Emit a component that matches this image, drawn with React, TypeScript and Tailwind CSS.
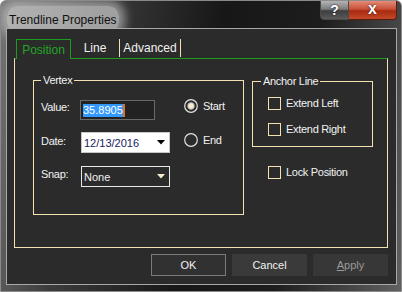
import React from 'react';

function Radio({ checked }: { checked?: boolean }) {
  return (
    <svg width="14" height="14" viewBox="0 0 14 14" className="shrink-0">
      <circle cx="7" cy="7" r="6.3" fill="#2b2b2b" stroke="#e4e4e4" strokeWidth="1.2" />
      {checked && <circle cx="7" cy="7" r="3.4" fill="#f6ecd0" stroke="#9a9a9a" strokeWidth="0.8" />}
    </svg>
  );
}

function CheckBox({ label }: { label: string }) {
  return (
    <div className="flex items-center h-[13px]">
      <div className="w-[13px] h-[13px] border border-[#f2e2b2] shrink-0" />
      <span className="ml-[5px] text-[11px] tracking-[-0.3px] text-[#f2f2f2] leading-[13px]">{label}</span>
    </div>
  );
}

function Arrow({ color }: { color: string }) {
  return (
    <svg width="8" height="5" viewBox="0 0 8 5" className="shrink-0">
      <path d="M0 0 L8 0 L4 4.5 Z" fill={color} />
    </svg>
  );
}

export default function App() {
  return (
    <div className="w-[402px] h-[292px] flex flex-col rounded-t-[6px] border border-[#8a8a8a] bg-[linear-gradient(100deg,#767676_0%,#3c3c3c_22%,#171717_50%,#1d1d1d_72%,#616161_100%)] font-['Liberation_Sans',Arial,sans-serif] overflow-hidden">
      {/* Title bar */}
      <div className="h-[27px] flex items-start justify-between shrink-0">
        <div className="ml-[6px] mt-[5px] px-[2px] py-[1px] rounded-[10px] bg-[rgba(205,205,205,0.7)] shadow-[0_0_10px_6px_rgba(205,205,205,0.6)]">
          <span className="text-[12px] leading-[15px] text-[#111]">Trendline Properties</span>
        </div>
        <div className="flex -mt-px mr-[4px]">
          <div className="w-[29px] h-[20px] flex items-center justify-center rounded-bl-[4px] border border-[#4a4a4a] bg-[linear-gradient(180deg,#b4b4b4_0%,#7c7c7c_45%,#3e3e3e_55%,#5a5a5a_100%)]">
            <span className="text-white font-bold text-[14px] leading-[14px] [text-shadow:0_0_2px_#000]">?</span>
          </div>
          <div className="w-[48px] h-[20px] flex items-center justify-center rounded-br-[4px] border border-[#5a1a10] border-l-0 bg-[linear-gradient(180deg,#e48c78_0%,#c85038_45%,#a82a10_55%,#c24a28_100%)]">
            <span className="text-white font-bold text-[16px] leading-[14px] -mt-[2px] [text-shadow:0_0_2px_#300]">x</span>
          </div>
        </div>
      </div>

      {/* Client area */}
      <div className="flex-1 ml-[5px] mr-[4px] mb-[6px] border border-[#a8a8a8] bg-[#2b2b2b] flex flex-col">
        {/* Tabs */}
        <div className="ml-[9px] mt-[10px] flex items-start h-[19px] text-[12px]">
          <div className="w-[55px] h-[20px] -mb-px relative z-10 bg-[#2b2b2b] border border-b-0 border-[#1e9a1e] text-[#22a622] flex items-center justify-center">
            Position
          </div>
          <div className="w-[49px] h-[18px] border-r border-[#f2e2b2] text-[#f2f2f2] flex items-center justify-center">
            Line
          </div>
          <div className="w-[61px] h-[18px] border-r border-[#f2e2b2] text-[#f2f2f2] flex items-center justify-center">
            Advanced
          </div>
        </div>

        {/* Tab panel */}
        <div className="ml-[7px] mr-[8px] h-[190px] border border-[#f2e2b2] border-t-[#1e9a1e] flex items-start pl-[18px] pt-[14px] text-[11px] text-[#f2f2f2]">
          {/* Vertex */}
          <fieldset className="w-[211px] h-[142px] border border-[#f2e2b2]">
            <legend className="ml-[7px] px-[2px] leading-[14px] tracking-[-0.3px]">Vertex</legend>
            <div className="pl-[7px] pt-[13px] flex flex-col">
              <div className="flex items-start h-[20px]">
                <span className="w-[39px] leading-[14px] tracking-[-0.3px]">Value:</span>
                <div className="w-[90px]">
                  <div className="w-[75px] h-[20px] border border-[#6a6a6a] bg-[#222] flex items-center pl-[2px]">
                    <span className="bg-[#3399ff] text-white leading-[13px]">35.8905</span>
                    <span className="w-[2px] h-[13px] bg-[#e07020]" />
                  </div>
                </div>
                <div className="ml-[14px] -mt-[1px] flex items-center gap-[5px]">
                  <Radio checked />
                  <span className="leading-[14px] tracking-[-0.3px]">Start</span>
                </div>
              </div>
              <div className="flex items-start h-[21px] mt-[12px]">
                <span className="w-[39px] mt-[2px] leading-[14px] tracking-[-0.3px]">Date:</span>
                <div className="w-[89px] ml-[1px] h-[21px] bg-white border border-[#c8c8c8] flex items-center justify-between pl-[2px] pr-[4px]">
                  <span className="text-[#1a1a5c] leading-[14px]">12/13/2016</span>
                  <Arrow color="#000" />
                </div>
                <div className="ml-[14px] mt-[1px] flex items-center gap-[5px]">
                  <Radio />
                  <span className="leading-[14px] tracking-[-0.3px]">End</span>
                </div>
              </div>
              <div className="flex items-start h-[21px] mt-[13px]">
                <span className="w-[39px] mt-[1px] leading-[14px] tracking-[-0.3px]">Snap:</span>
                <div className="w-[89px] ml-[1px] h-[21px] border border-[#e8e8e8] flex items-center justify-between pl-[2px] pr-[4px]">
                  <span className="leading-[14px]">None</span>
                  <Arrow color="#f6ecd0" />
                </div>
              </div>
            </div>
          </fieldset>

          {/* Anchor Line + Lock */}
          <div className="ml-[8px] mt-[1px] flex flex-col">
            <fieldset className="w-[121px] h-[73px] border border-[#f2e2b2]">
              <legend className="ml-[8px] px-[2px] leading-[14px] tracking-[-0.3px]">Anchor Line</legend>
              <div className="pl-[15px] pt-[9px] flex flex-col gap-[13px]">
                <CheckBox label="Extend Left" />
                <CheckBox label="Extend Right" />
              </div>
            </fieldset>
            <div className="ml-[16px] mt-[19px]">
              <CheckBox label="Lock Position" />
            </div>
          </div>
        </div>

        {/* Buttons */}
        <div className="mt-[6px] pr-[8px] flex justify-end gap-[6px] text-[11px]">
          <button className="w-[75px] h-[22px] border border-[#7a7a7a] bg-[#313131] text-[#f2f2f2]">OK</button>
          <button className="w-[75px] h-[22px] bg-[#3a3a3a] text-[#f2f2f2]">Cancel</button>
          <button className="w-[75px] h-[22px] bg-[#373737] text-[#9a9a9a]">
            <span className="underline">A</span>pply
          </button>
        </div>
      </div>
    </div>
  );
}
